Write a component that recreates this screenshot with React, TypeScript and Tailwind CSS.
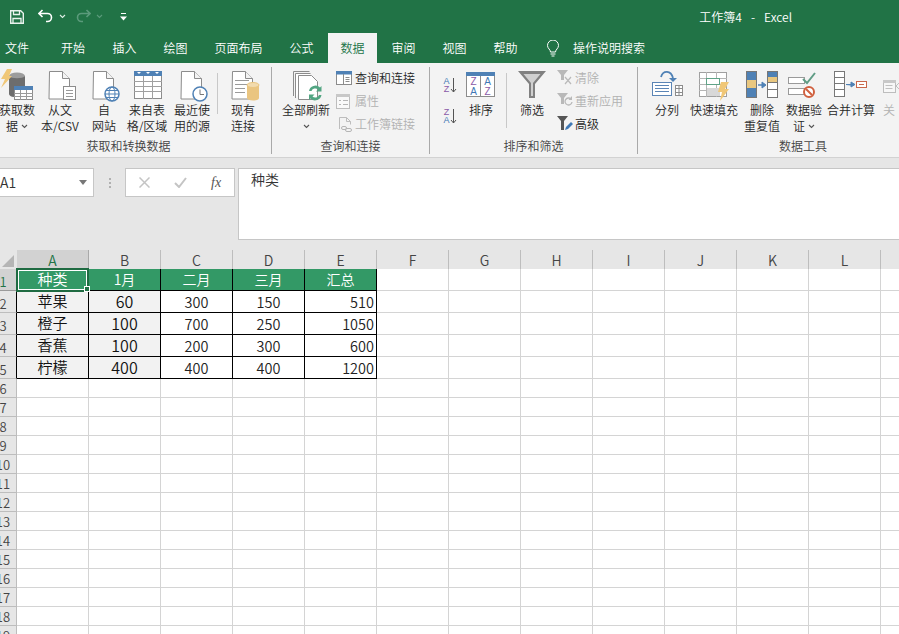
import type { ReactNode } from 'react';

const FONT = "font-['Noto_Sans_CJK_SC',sans-serif] font-[350]";

const Ic = ({ vb, w, h, children }: { vb: string; w: number; h: number; children: ReactNode }) => (
  <svg viewBox={vb} width={w} height={h} className="block shrink-0 overflow-visible">
    {children}
  </svg>
);

const Chevron = ({ color = '#555' }: { color?: string }) => (
  <svg viewBox="0 0 7 5" width={7} height={5} className="inline-block shrink-0">
    <path d="M1 1l2.500 2.500L6 1" fill="none" stroke={color} strokeWidth="1.100" />
  </svg>
);

const BigButton = ({ className, icon, children }: { className: string; icon: ReactNode; children: ReactNode }) => (
  <div className={`flex flex-col items-center shrink-0 ${className}`}>
    <div className="h-[32px] flex justify-center">{icon}</div>
    <div className="mt-[1px] text-[12px] leading-[16px] text-center whitespace-nowrap flex flex-col items-center">{children}</div>
  </div>
);

const SmallRow = ({ icon, label, off, iconClass = 'w-[19px]' }: { icon: ReactNode; label: string; off?: boolean; iconClass?: string }) => (
  <div className="h-[23px] flex items-center">
    <div className={`h-[23px] flex items-center shrink-0 ${iconClass}`}>{icon}</div>
    <span className={off ? 'text-[12px] leading-[16px] text-[#b1b1b1]' : 'text-[12px] leading-[16px] text-[#262626]'}>{label}</span>
  </div>
);

const Group = ({ className, label, labelClass, children }: { className: string; label: string; labelClass: string; children: ReactNode }) => (
  <div className={`h-[87px] mt-[4px] flex flex-col shrink-0 ${className}`}>
    <div className="h-[71px] pt-[2px] flex">{children}</div>
    <div className={`h-[16px] text-[12px] leading-[16px] text-center text-[#444] ${labelClass}`}>{label}</div>
  </div>
);

const Page = ({ x }: { x: number }) => (
  <g transform={`translate(${x} 0)`}>
    <path d="M0.500 71.500h13l7 7v20.500h-20.500z" fill="#fff" stroke="#8c8c8c" />
    <path d="M13.500 71.500v7h7" fill="#f3f3f3" stroke="#8c8c8c" />
  </g>
);

const GetDataIcon = () => (
  <Ic vb="0 69 34 32" w={34} h={32}>
    <ellipse cx="17" cy="76" rx="8" ry="3.500" fill="#9c9c9c" />
    <path d="M9 76v18c0 1.500 2 3 5 3h3V86h8V76c-2 3-14 3-16 0z" fill="#6d6d6d" />
    <path d="M7 69h5l-3 7h3L1 88l4-9H1z" fill="#f0c777" />
    <rect x="14.500" y="86.500" width="18" height="13" fill="#fff" stroke="#8c8c8c" />
    <rect x="14" y="86" width="19" height="4" fill="#4f81b5" />
    <path d="M14 93.500h19M14 96.500h19M20.500 90v10M26.500 90v10" stroke="#9a9a9a" fill="none" />
  </Ic>
);

const TextFileIcon = () => (
  <Ic vb="42 69 36 32" w={36} h={32}>
    <Page x={49} />
    <rect x="63.500" y="86.500" width="12" height="13" fill="#fff" stroke="#8c8c8c" />
    <path d="M66 90.500h7M66 93.500h7M66 96.500h7" stroke="#9a9a9a" />
  </Ic>
);

const WebIcon = () => (
  <Ic vb="88 69 32 32" w={32} h={32}>
    <Page x={93} />
    <circle cx="112" cy="94" r="7" fill="#fff" stroke="#4f81b5" strokeWidth="1.500" />
    <ellipse cx="112" cy="94" rx="3" ry="7" fill="none" stroke="#4f81b5" />
    <path d="M105 94h14M106 90.500h12M106 97.500h12" stroke="#4f81b5" />
  </Ic>
);

const TableIcon = () => (
  <Ic vb="131 69 32 32" w={32} h={32}>
    <rect x="134.500" y="71.500" width="27" height="27" fill="#fff" stroke="#8c8c8c" />
    <rect x="134" y="71" width="28" height="5" fill="#4f81b5" />
    <path d="M143.500 76v23M152.500 76v23M134 81.500h28M134 86.500h28M134 91.500h28" stroke="#a0a0a0" />
    <path d="M137 72l2 2 2-2zM146 72l2 2 2-2zM155 72l2 2 2-2z" fill="#fff" />
  </Ic>
);

const RecentIcon = () => (
  <Ic vb="176 69 32 32" w={32} h={32}>
    <Page x={181} />
    <circle cx="200" cy="94" r="7" fill="#fff" stroke="#4f81b5" strokeWidth="1.500" />
    <path d="M200 89.500V94.500h4" fill="none" stroke="#777" />
  </Ic>
);

const ExistingIcon = () => (
  <Ic vb="227 69 32 32" w={32} h={32}>
    <Page x={232} />
    <path d="M235 80.500h14M235 84.500h14M235 88.500h10M235 92.500h10" stroke="#9a9a9a" />
    <path d="M247 85v13c0 1.500 2.500 2.500 6 2.500s6-1 6-2.500V85z" fill="#eac580" />
    <ellipse cx="253" cy="85" rx="6" ry="2.500" fill="#f2dbae" stroke="#eac580" />
  </Ic>
);

const RefreshAllIcon = () => (
  <Ic vb="290 69 32 32" w={32} h={32}>
    <path d="M293.500 96V71.500h16" fill="none" stroke="#8c8c8c" />
    <path d="M295.500 98V73.500h15" fill="#fff" stroke="#8c8c8c" />
    <path d="M298.500 99.500v-24h13l6 6v18z" fill="#fff" stroke="#8c8c8c" />
    <path d="M309 91a6.500 6.500 0 0 1 11-3.500l1.500-1.500v5.500H316l2-2a4 4 0 0 0-6.500 1.500zM321.500 95a6.500 6.500 0 0 1-11 3.500L309 100v-5.500h5.500l-2 2a4 4 0 0 0 6.500-1.500z" fill="#52a582" />
  </Ic>
);

const QueryIcon = () => (
  <Ic vb="336 70 16 14" w={16} h={14}>
    <rect x="336.500" y="70.500" width="15" height="13" fill="#fff" stroke="#8c8c8c" />
    <rect x="336" y="70" width="16" height="3.500" fill="#4f81b5" />
    <path d="M345.500 76.500h4M345.500 78.500h4M345.500 80.500h4M343.500 73v10" stroke="#8c8c8c" />
  </Ic>
);

const PropsIcon = () => (
  <Ic vb="337 92 14 15" w={14} h={15}>
    <rect x="337.500" y="92.500" width="13" height="14" fill="#f9f9f9" stroke="#bdbdbd" />
    <rect x="337" y="92" width="14" height="3" fill="#c8c8c8" />
    <path d="M340 98.500h2M344 98.500h5M340 102.500h2M344 102.500h5" stroke="#b5b5b5" />
  </Ic>
);

const LinkIcon = () => (
  <Ic vb="339 116 13 15" w={13} h={15}>
    <path d="M339.500 128v-11.500h7l4 4v3" fill="none" stroke="#bdbdbd" />
    <path d="M346.500 116.500v4h4" fill="none" stroke="#bdbdbd" />
    <rect x="341.500" y="125.500" width="5" height="3" rx="1.500" fill="none" stroke="#b5b5b5" />
    <rect x="345.500" y="127.500" width="6" height="3" rx="1.500" fill="none" stroke="#b5b5b5" />
  </Ic>
);

const SortLetters = ({ top, bottom, y, c1, c2 }: { top: string; bottom: string; y: number; c1: string; c2: string }) => (
  <Ic vb={`443 ${y} 16 17`} w={16} h={17}>
    <text x="446.500" y={y + 8} fontSize="9" textAnchor="middle" fill={c1} fontFamily="Liberation Sans, sans-serif">{top}</text>
    <text x="446.500" y={y + 16} fontSize="9" textAnchor="middle" fill={c2} fontFamily="Liberation Sans, sans-serif">{bottom}</text>
    <path d={`M453.500 ${y + 2}v14M451 ${y + 13}l2.500 3 2.500-3`} fill="none" stroke="#555" />
  </Ic>
);

const SortIcon = () => (
  <Ic vb="465 69 32 32" w={32} h={32}>
    <rect x="466.500" y="72.500" width="28" height="24" fill="#fff" stroke="#8c8c8c" />
    <rect x="466" y="72" width="29" height="4" fill="#4f81b5" />
    <path d="M480.500 76v21" stroke="#8c8c8c" />
    <g fontSize="10" textAnchor="middle" fontFamily="Liberation Sans, sans-serif">
      <text x="473.500" y="85" fill="#8a5aa8">Z</text>
      <text x="473.500" y="95" fill="#3f78b5">A</text>
      <text x="487.500" y="85" fill="#3f78b5">A</text>
      <text x="487.500" y="95" fill="#8a5aa8">Z</text>
    </g>
  </Ic>
);

const FilterIcon = () => (
  <Ic vb="516 69 32 32" w={32} h={32}>
    <path d="M518 71h28l-11 13v14h-6V84z" fill="#808080" />
    <path d="M523.500 74h17l-7.500 9v13h-2V83z" fill="#cfcfcf" />
  </Ic>
);

const ClearIcon = () => (
  <Ic vb="557 70 16 16" w={16} h={16}>
    <path d="M557 70h11l-4 5v5h-3v-5z" fill="#b9b9b9" />
    <path d="M565 77l6 7m0-7l-6 7" stroke="#b9b9b9" strokeWidth="1.200" />
  </Ic>
);

const ReapplyIcon = () => (
  <Ic vb="557 93 16 16" w={16} h={16}>
    <path d="M557 93h11l-4 5v6h-3v-6z" fill="#b9b9b9" />
    <path d="M572 102a3.500 3.500 0 1 1-1-3" fill="none" stroke="#b9b9b9" strokeWidth="1.300" />
    <path d="M572 96v4h-3.500z" fill="#b9b9b9" />
  </Ic>
);

const AdvancedIcon = () => (
  <Ic vb="557 116 16 16" w={16} h={16}>
    <path d="M557 116h11l-4 5v9h-3v-9z" fill="#555" />
    <path d="M565 130l1-3 5-5 2 2-5 5z" fill="#3f78b5" />
  </Ic>
);

const SplitIcon = () => (
  <Ic vb="651 69 32 32" w={32} h={32}>
    <rect x="652.500" y="82.500" width="19" height="13" fill="#fff" stroke="#5b85b5" />
    <path d="M655 85.500h14M655 88.500h14M655 91.500h14" stroke="#5b85b5" />
    <rect x="675.500" y="85.500" width="7" height="10" fill="#fff" stroke="#8c8c8c" />
    <path d="M675 88.500h8M675 92.500h8M679 86v10" stroke="#8c8c8c" />
    <path d="M661 77c2-7 10-7 12 1" fill="none" stroke="#4f81b5" strokeWidth="1.800" />
    <path d="M669 78h8l-4 4z" fill="#4f81b5" />
  </Ic>
);

const FlashIcon = () => (
  <Ic vb="699 69 32 32" w={32} h={32}>
    <rect x="700.500" y="72.500" width="27" height="24" fill="#fff" stroke="#a0a0a0" />
    <path d="M700 78.500h28M700 84.500h28M700 90.500h28M707.500 72v25M717.500 72v25" stroke="#b5b5b5" />
    <rect x="707.500" y="78.500" width="13" height="6" fill="#fff" stroke="#5fa387" />
    <rect x="708" y="88" width="13" height="8" fill="#d8d8d8" />
    <path d="M722 82h8l-4 7h4l-9 12 2-9h-4z" fill="#f0c777" />
  </Ic>
);

const DedupeIcon = () => (
  <Ic vb="746 69 32 32" w={32} h={32}>
    <rect x="746.500" y="71.500" width="10" height="26" fill="#fff" stroke="#777" />
    <rect x="747" y="72" width="9" height="8" fill="#4f81b5" />
    <rect x="747" y="80" width="9" height="8" fill="#e9c77f" />
    <rect x="747" y="88" width="9" height="9" fill="#4f81b5" />
    <rect x="767.500" y="71.500" width="10" height="26" fill="#fff" stroke="#777" />
    <rect x="768" y="72" width="9" height="5" fill="#4f81b5" />
    <rect x="768" y="77" width="9" height="5" fill="#e9c77f" />
    <path d="M767 82.500h11M767 89.500h11" stroke="#777" />
    <path d="M758 85h4V82l4 3-4 3v-3z" fill="#4f81b5" stroke="#4f81b5" />
  </Ic>
);

const ValidateIcon = () => (
  <Ic vb="788 69 36 32" w={36} h={32}>
    <rect x="790.500" y="77.500" width="16" height="6" fill="#fff" stroke="#9a9a9a" />
    <rect x="790.500" y="88.500" width="16" height="6" fill="#fff" stroke="#9a9a9a" />
    <path d="M805 79l4 4 8-10" fill="none" stroke="#5f9c85" strokeWidth="2" />
    <circle cx="811" cy="92" r="5" fill="#fff" stroke="#d0603f" strokeWidth="2" />
    <path d="M808 89l6 6" stroke="#d0603f" strokeWidth="2" />
  </Ic>
);

const ConsolidateIcon = () => (
  <Ic vb="835 69 34 32" w={34} h={32}>
    <rect x="835.500" y="71.500" width="10" height="25" fill="#fff" stroke="#777" />
    <path d="M835 77.500h11M835 83.500h11M835 89.500h11" stroke="#777" />
    <path d="M847 84.500h5V82l4 2.500-4 2.500v-2z" fill="#4f81b5" stroke="#4f81b5" />
    <rect x="857.500" y="81.500" width="10" height="6" fill="#fff" stroke="#c9684c" />
    <path d="M860 84.500h5" stroke="#c9684c" />
  </Ic>
);

const RelationIcon = () => (
  <Ic vb="883 69 16 32" w={16} h={32}>
    <rect x="883.500" y="80.500" width="12" height="12" fill="#f7f7f7" stroke="#bdbdbd" />
    <rect x="883" y="80" width="13" height="3" fill="#c8c8c8" />
    <path d="M885.500 85.500h7M885.500 88.500h7M899 83l-3 3 3 3" fill="none" stroke="#c0c0c0" />
  </Ic>
);

const TABS = [
  { label: '开始', cls: 'w-[52px]' },
  { label: '插入', cls: 'w-[51px]' },
  { label: '绘图', cls: 'w-[51px]' },
  { label: '页面布局', cls: 'w-[75px]' },
  { label: '公式', cls: 'w-[51px]' },
];

// M is there for its gridlines, its letter falls past the window edge
const COLS = ['A', 'B', 'C', 'D', 'E', 'F', 'G', 'H', 'I', 'J', 'K', 'L', ''];

const ROW_CLASS = [
  'h-[22px]', 'h-[22px]', 'h-[22px]', 'h-[22px]', 'h-[22px]',
  ...Array(14).fill('h-[19px]'),
];

const DATA = [
  ['种类', '1月', '二月', '三月', '汇总'],
  ['苹果', '60', '300', '150', '510'],
  ['橙子', '100', '700', '250', '1050'],
  ['香蕉', '100', '200', '300', '600'],
  ['柠檬', '400', '400', '400', '1200'],
];

const Cell = ({ r, c }: { r: number; c: number }) => {
  const v = DATA[r]?.[c];
  if (v === undefined) {
    return <div className="w-[72px] shrink-0 border-r border-b border-[#d4d4d4]" />;
  }
  if (r === 0) {
    return (
      <div className={`relative w-[72px] shrink-0 bg-[#339966] text-white flex items-center justify-center border-r border-b border-black ${c === 0 ? 'text-[15px]' : 'text-[14px]'}`}>
        {v}
        {c === 0 && (
          <>
            <div className="absolute -left-[1px] -top-[1px] w-[73px] h-[24px] border-2 border-[#1f6b42]">
              <div className="w-full h-full border border-white" />
            </div>
            <div className="absolute -right-[2px] -bottom-[2px] w-[6px] h-[6px] z-10 bg-[#217346] border border-white" />
          </>
        )}
      </div>
    );
  }
  if (c < 2) {
    return (
      <div className={`w-[72px] shrink-0 bg-[#f2f2f2] text-[#111] flex items-center justify-center border-r border-b border-black pb-[1px] ${c === 0 ? 'text-[15px]' : 'text-[16px]'}`}>
        {v}
      </div>
    );
  }
  return (
    <div className={`w-[72px] shrink-0 text-[14.500px] text-[#222] flex items-center border-r border-b border-black pt-[1px] ${c === 4 ? 'justify-end pr-[2px]' : 'justify-center'}`}>
      {v}
    </div>
  );
};

export default function App() {
  return (
    <div className={`w-[899px] h-[634px] overflow-hidden bg-[#e6e6e6] text-[#262626] ${FONT}`}>
      {/* title bar */}
      <div className="h-[33px] bg-[#217346] flex items-center text-white">
        <svg viewBox="0 0 14 14" width={14} height={14} className="ml-[10px]">
          <path d="M.7.7h10l2.600 2.600v10H.7z" fill="none" stroke="#eaf3ee" strokeWidth="1.400" />
          <path d="M3.500 1v3.500h6V1M3 13V8.500h8V13" fill="none" stroke="#eaf3ee" strokeWidth="1.300" />
        </svg>
        <svg viewBox="0 0 16 14" width={16} height={14} className="ml-[14px] -mt-[2px]">
          <path d="M1 4.500h8.500a4 4 0 0 1 0 8H8M4.500 1L1 4.500 4.500 8" fill="none" stroke="#fff" strokeWidth="1.600" />
        </svg>
        <div className="ml-[5px] flex"><Chevron color="#dfeee6" /></div>
        <svg viewBox="0 0 16 14" width={16} height={14} className="ml-[9px] -mt-[2px]">
          <path d="M15 4.500H6.500a4 4 0 0 0 0 8H8M11.500 1L15 4.500 11.500 8" fill="none" stroke="#5b9a7b" strokeWidth="1.600" />
        </svg>
        <div className="ml-[5px] flex"><Chevron color="#5b9a7b" /></div>
        <svg viewBox="0 0 7 8" width={7} height={8} className="ml-[17px]">
          <path d="M1 .5h5" stroke="#fff" />
          <path d="M0 3.500h7L3.500 7.500z" fill="#fff" />
        </svg>
        <div className="ml-auto mr-[107px] flex text-[12px] leading-[16px] whitespace-nowrap">
          <span>工作簿4</span>
          <span className="ml-[9px]">-</span>
          <span className="ml-[9px]">Excel</span>
        </div>
      </div>

      {/* tabs */}
      <div className="h-[30px] bg-[#217346] flex text-white text-[12px] leading-[30px]">
        <div className="w-[47px] pl-[5px] shrink-0">文件</div>
        {TABS.map(t => (
          <div key={t.label} className={`${t.cls} text-center shrink-0`}>{t.label}</div>
        ))}
        <div className="w-[51px] shrink-0 px-[1px]">
          <div className="bg-[#f3f3f3] text-[#217346] text-center h-[30px]">数据</div>
        </div>
        <div className="w-[51px] text-center shrink-0">审阅</div>
        <div className="w-[51px] text-center shrink-0">视图</div>
        <div className="w-[51px] text-center shrink-0">帮助</div>
        <div className="ml-[16px] flex items-center">
          <svg viewBox="0 0 12 17" width={12} height={17}>
            <path d="M3.500 12c0-2.500-3-3.500-3-6.500a5.500 5.500 0 0 1 11 0c0 3-3 4-3 6.500zM3.500 14h5M4.500 16h3" fill="none" stroke="#fff" />
          </svg>
        </div>
        <div className="ml-[14px]">操作说明搜索</div>
      </div>

      {/* ribbon */}
      <div className="h-[95px] bg-[#f3f3f3] border-b border-[#d2d2d2] flex overflow-hidden">
        <Group className="w-[272px] border-r border-[#a9a9a9]" label="获取和转换数据" labelClass="pr-[14px]">
          <BigButton className="w-[34px]" icon={<GetDataIcon />}>
            <span>获取数</span>
            <span className="flex items-center gap-[3px]">据<Chevron /></span>
          </BigButton>
          <BigButton className="w-[52px]" icon={<TextFileIcon />}>
            <span>从文</span>
            <span>本/CSV</span>
          </BigButton>
          <BigButton className="w-[36px]" icon={<WebIcon />}>
            <span>自</span>
            <span>网站</span>
          </BigButton>
          <BigButton className="w-[50px]" icon={<TableIcon />}>
            <span>来自表</span>
            <span>格/区域</span>
          </BigButton>
          <BigButton className="w-[40px]" icon={<RecentIcon />}>
            <span>最近使</span>
            <span>用的源</span>
          </BigButton>
          <div className="w-[10px] shrink-0 flex justify-center pt-[4px]">
            <div className="w-px h-[41px] bg-[#c8c8c8]" />
          </div>
          <BigButton className="w-[42px]" icon={<ExistingIcon />}>
            <span>现有</span>
            <span>连接</span>
          </BigButton>
        </Group>

        <Group className="w-[158px] border-r border-[#a9a9a9]" label="查询和连接" labelClass="">
          <BigButton className="w-[48px] ml-[10px]" icon={<RefreshAllIcon />}>
            <span>全部刷新</span>
            <span className="h-[16px] flex items-center"><Chevron /></span>
          </BigButton>
          <div className="ml-[6px] -mt-[3px] flex flex-col">
            <SmallRow icon={<div className="pt-[1px]"><QueryIcon /></div>} label="查询和连接" />
            <SmallRow icon={<div className="pt-[1px]"><PropsIcon /></div>} label="属性" off />
            <SmallRow icon={<div className="pl-[3px] pt-[1px]"><LinkIcon /></div>} label="工作簿链接" off />
          </div>
        </Group>

        <Group className="w-[208px] border-r border-[#a9a9a9]" label="排序和筛选" labelClass="">
          <div className="ml-[13px] w-[20px] flex flex-col shrink-0">
            <div className="pt-[7px]"><SortLetters top="A" bottom="Z" y={76} c1="#3f78b5" c2="#8a5aa8" /></div>
            <div className="pt-[14px]"><SortLetters top="Z" bottom="A" y={107} c1="#8a5aa8" c2="#3f78b5" /></div>
          </div>
          <BigButton className="w-[32px] ml-[2px]" icon={<SortIcon />}>
            <span>排序</span>
          </BigButton>
          <div className="w-[19px] shrink-0 flex justify-center pt-[4px]">
            <div className="w-px h-[55px] bg-[#c8c8c8]" />
          </div>
          <BigButton className="w-[32px]" icon={<FilterIcon />}>
            <span>筛选</span>
          </BigButton>
          <div className="ml-[9px] -mt-[3px] flex flex-col">
            <SmallRow iconClass="w-[18px]" icon={<div className="pt-[1px]"><ClearIcon /></div>} label="清除" off />
            <SmallRow iconClass="w-[18px]" icon={<div className="pt-[1px]"><ReapplyIcon /></div>} label="重新应用" off />
            <SmallRow iconClass="w-[18px]" icon={<div className="pt-[1px]"><AdvancedIcon /></div>} label="高级" />
          </div>
        </Group>

        <Group className="w-[330px]" label="数据工具" labelClass="">
          <BigButton className="w-[46px] ml-[6px]" icon={<SplitIcon />}>
            <span>分列</span>
          </BigButton>
          <BigButton className="w-[48px]" icon={<FlashIcon />}>
            <span>快速填充</span>
          </BigButton>
          <BigButton className="w-[36px] ml-[6px]" icon={<DedupeIcon />}>
            <span>删除</span>
            <span>重复值</span>
          </BigButton>
          <BigButton className="w-[36px] ml-[6px]" icon={<ValidateIcon />}>
            <span>数据验</span>
            <span className="flex items-center gap-[3px]">证<Chevron /></span>
          </BigButton>
          <BigButton className="w-[48px] ml-[5px]" icon={<ConsolidateIcon />}>
            <span>合并计算</span>
          </BigButton>
          <div className="ml-[8px] flex flex-col items-start shrink-0 text-[#b1b1b1]">
            <RelationIcon />
            <span className="mt-[1px] text-[12px] leading-[16px]">关</span>
          </div>
        </Group>
      </div>

      {/* formula bar */}
      <div className="h-[92px] pt-[10px] flex items-start">
        <div className="w-[94px] h-[29px] bg-white border border-l-0 border-[#c6c6c6] flex items-center text-[14px] text-[#333] shrink-0">
          <span>A1</span>
          <svg viewBox="0 0 8 5" width={8} height={5} className="ml-auto mr-[6px]">
            <path d="M0 0h8L4 5z" fill="#777" />
          </svg>
        </div>
        <div className="w-[31px] h-[29px] flex flex-col items-center justify-center gap-[2px] shrink-0">
          <div className="w-[2px] h-[2px] bg-[#b0b0b0]" />
          <div className="w-[2px] h-[2px] bg-[#b0b0b0]" />
          <div className="w-[2px] h-[2px] bg-[#b0b0b0]" />
        </div>
        <div className="w-[110px] h-[29px] bg-white border border-[#c6c6c6] flex items-center shrink-0">
          <svg viewBox="0 0 11 11" width={11} height={11} className="ml-[13px]">
            <path d="M.5.5l10 10m0-10l-10 10" stroke="#c4c4c4" strokeWidth="1.500" />
          </svg>
          <svg viewBox="0 0 13 11" width={13} height={11} className="ml-[24px]">
            <path d="M1 6l4 4 7-9" fill="none" stroke="#c4c4c4" strokeWidth="2" />
          </svg>
          <span className="ml-[24px] text-[14px] italic font-['Liberation_Serif',serif] text-[#555]">fx</span>
        </div>
        <div className="ml-[3px] flex-1 h-[72px] bg-white border border-r-0 border-[#c6c6c6] pl-[12px] text-[14px] leading-[20px] text-[#333]">
          种类
        </div>
      </div>

      {/* column headers */}
      <div className="h-[19px] flex text-[14px] leading-[21px] text-[#444]">
        <div className="relative w-[17px] shrink-0">
          <svg viewBox="0 0 12 12" width={12} height={12} className="absolute left-[2px] top-[5px]">
            <path d="M12 0v12H0z" fill="#b5b5b5" />
          </svg>
        </div>
        {COLS.map((c, i) => (
          <div
            key={i}
            className={i === 0
              ? 'w-[72px] shrink-0 text-center bg-[#d2d2d2] text-[#217346] border-r border-[#a9a9a9]'
              : 'w-[72px] shrink-0 text-center border-r border-[#bdbdbd]'}
          >
            {c}
          </div>
        ))}
      </div>

      {/* rows */}
      {ROW_CLASS.map((h, r) => (
        <div key={r} className={`${h} flex bg-white`}>
          <div
            className={`w-[17px] shrink-0 overflow-hidden flex justify-end items-end border-r border-b text-[13px] ${
              r === 0
                ? 'bg-[#d2d2d2] text-[#217346] border-[#9a9a9a]'
                : r < 5
                  ? 'bg-[#e6e6e6] text-[#444] border-r-black border-b-[#bdbdbd]'
                  : 'bg-[#e6e6e6] text-[#444] border-[#bdbdbd]'
            }`}
          >
            <div className="w-[26px] shrink-0 text-center leading-[17px]">{r + 1}</div>
          </div>
          {COLS.map((_, c) => (
            <Cell key={c} r={r} c={c} />
          ))}
        </div>
      ))}
    </div>
  );
}
